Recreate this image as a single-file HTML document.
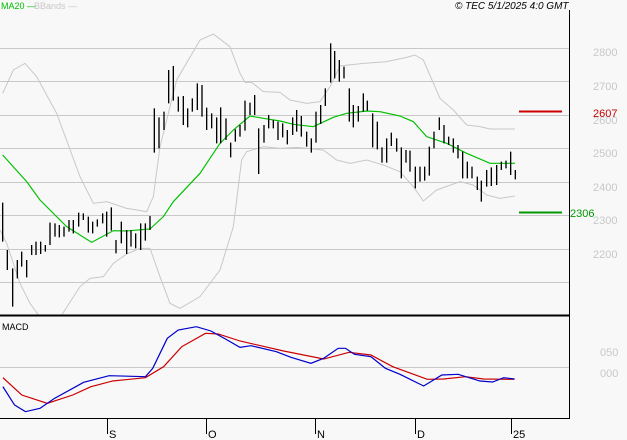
<!DOCTYPE html>
<html><head><style>
html,body{margin:0;padding:0;background:#f8f8f8;}
svg{display:block;font-family:"Liberation Sans",sans-serif;}
</style></head><body>
<svg width="627" height="440" viewBox="0 0 627 440" xmlns="http://www.w3.org/2000/svg">
<rect width="627" height="440" fill="#f8f8f8"/>
<g stroke="#c8c8c8" stroke-width="1">
<line x1="0" y1="48.5" x2="569" y2="48.5"/>
<line x1="0" y1="81.5" x2="569" y2="81.5"/>
<line x1="0" y1="115.5" x2="569" y2="115.5"/>
<line x1="0" y1="148.5" x2="569" y2="148.5"/>
<line x1="0" y1="182.5" x2="569" y2="182.5"/>
<line x1="0" y1="215.5" x2="569" y2="215.5"/>
<line x1="0" y1="249.5" x2="569" y2="249.5"/>
<line x1="0" y1="282.5" x2="569" y2="282.5"/>
<line x1="0" y1="367.5" x2="569" y2="367.5"/>
</g>
<g transform="translate(0,30) scale(0.33333)" fill="none">
<polyline stroke="#c8c8c8" stroke-width="3" points="8,190 40,120 75,100 110,140 170,250 240,440 280,520 320,515 380,535 440,545 460,500 480,350 530,150 600,30 640,12 690,50 720,130 735,157 755,157 790,185 840,187 870,210 920,220 960,215 990,170 1020,108 1090,100 1160,95 1220,82 1245,75 1270,90 1320,205 1360,240 1400,285 1440,290 1470,297 1545,297"/>
<polyline stroke="#c8c8c8" stroke-width="3" points="0,600 20,640 60,760 90,820 115,855 185,855 240,770 270,745 310,740 340,700 380,672 420,655 450,655 480,740 510,820 540,835 600,800 660,720 700,590 725,390 740,365 790,350 840,355 890,352 970,360 1010,390 1050,400 1100,390 1150,405 1200,425 1240,470 1270,513 1310,480 1380,455 1420,465 1460,495 1500,505 1545,498"/>
<polyline stroke="#00c000" stroke-width="3.5" points="8,375 80,455 120,510 200,590 275,637 340,602 380,603 450,597 490,560 520,515 600,430 660,340 700,300 750,258 790,265 840,273 880,283 940,290 1000,262 1040,250 1100,243 1140,245 1200,258 1240,275 1280,320 1340,340 1400,370 1470,400 1545,400"/>
<path stroke="#000" stroke-width="4" d="M8 518V635M22 660V720M38 715V830M52 690V745M65 665V710M80 690V742M95 645V675M108 635V675M122 635V672M136 645V665M150 578V645M165 580V620M178 585V622M192 590V620M207 570V605M220 570V610M236 548V590M250 550V570M265 560V608M278 575V610M292 568V590M308 550V580M320 545V620M334 532V602M348 630V670M364 575V640M380 600V672M393 600V650M407 610V655M422 580V660M436 580V632M450 558V600M463 235V368M477 262V355M492 245V300M506 120V220M520 108V212M535 200V245M550 198V285M563 235V292M577 205V245M592 160V240M606 165V260M620 233V300M635 250V295M650 262V340M662 232V340M678 265V330M692 338V382M706 298V335M720 285V320M735 212V302M750 218V255M764 195V255M776 295V432M792 285V338M806 255V295M820 270V295M834 275V330
M848 280V322M862 300V343M878 262V315M890 240V305M904 258V320M920 305V350M934 325V368M948 245V338M962 225V282M976 175V228M992 40V158M1004 63V145M1018 90V155M1032 110V145M1048 175V275M1060 225V292M1075 228V275M1090 190V245M1102 212V242M1118 250V352M1132 275V358M1146 352V398M1160 325V398M1174 308V348M1190 325V365M1204 352V445M1218 360V398M1230 362V425M1246 410V475M1260 410V455M1274 410V452M1288 350V437M1302 305V355M1318 262V300M1332 285V340M1346 320V345M1360 325V368M1374 345V385M1388 365V445M1402 395V445M1416 410V445M1432 440V480M1444 452V515M1460 420V470M1474 412V468M1490 405V465M1504 395V420M1518 392V415M1532 365V435M1546 420V448"/>
</g>
<line x1="519" y1="111.5" x2="562" y2="111.5" stroke="#cc0000" stroke-width="2"/>
<line x1="519" y1="212.5" x2="562" y2="212.5" stroke="#009900" stroke-width="2"/>
<g transform="translate(0,315) scale(0.36364,0.33333)" fill="none" stroke-width="3.5">
<polyline stroke="#cc0000" points="8,188 60,240 130,265 200,240 250,215 310,198 400,188 450,155 500,95 565,55 600,57 660,78 780,108 890,132 960,112 1020,120 1080,155 1175,193 1220,192 1280,185 1330,192 1415,193"/>
<polyline stroke="#0000cc" points="8,215 40,270 70,290 110,280 150,250 230,202 300,182 400,185 420,160 460,70 490,45 540,35 580,48 620,72 660,97 690,92 760,110 800,127 855,145 890,130 930,100 950,100 975,118 1020,125 1060,160 1100,178 1165,213 1215,180 1260,178 1320,198 1355,201 1385,188 1415,192"/>
</g>
<line x1="569.5" y1="10" x2="569.5" y2="419" stroke="#000" stroke-width="1"/>
<line x1="0" y1="315.5" x2="570" y2="315.5" stroke="#000" stroke-width="2"/>
<line x1="0" y1="418.5" x2="570" y2="418.5" stroke="#000" stroke-width="1"/>
<g stroke="#000" stroke-width="1">
<line x1="107.5" y1="419" x2="107.5" y2="434"/>
<line x1="206.5" y1="419" x2="206.5" y2="434"/>
<line x1="315.5" y1="419" x2="315.5" y2="434"/>
<line x1="415.5" y1="419" x2="415.5" y2="434"/>
<line x1="511.5" y1="419" x2="511.5" y2="434"/>
</g>
<g font-size="11" fill="#000">
<text x="109" y="438">S</text>
<text x="208" y="438">O</text>
<text x="317" y="438">N</text>
<text x="417" y="438">D</text>
<text x="513" y="438">25</text>
</g>
<g font-size="11" fill="#c8c8c8">
<text x="593" y="56">2800</text>
<text x="593" y="90">2700</text>
<text x="593" y="124">2600</text>
<text x="593" y="157">2500</text>
<text x="593" y="191">2400</text>
<text x="593" y="224">2300</text>
<text x="593" y="258">2200</text>
<text x="600" y="356">050</text>
<text x="600" y="377">000</text>
</g>
<text x="593" y="117" font-size="11" fill="#cc0000">2607</text>
<text x="570" y="217" font-size="11" fill="#009900">2306</text>
<text x="2" y="330" font-size="9" fill="#000">MACD</text>
<text x="1" y="9" font-size="9" fill="#00c000">MA20 —</text>
<text x="34" y="9" font-size="9" fill="#c8c8c8">BBands —</text>
<text x="455" y="9" font-size="10" font-style="italic" fill="#000">© TEC 5/1/2025 4:0 GMT</text>
</svg>
</body></html>
